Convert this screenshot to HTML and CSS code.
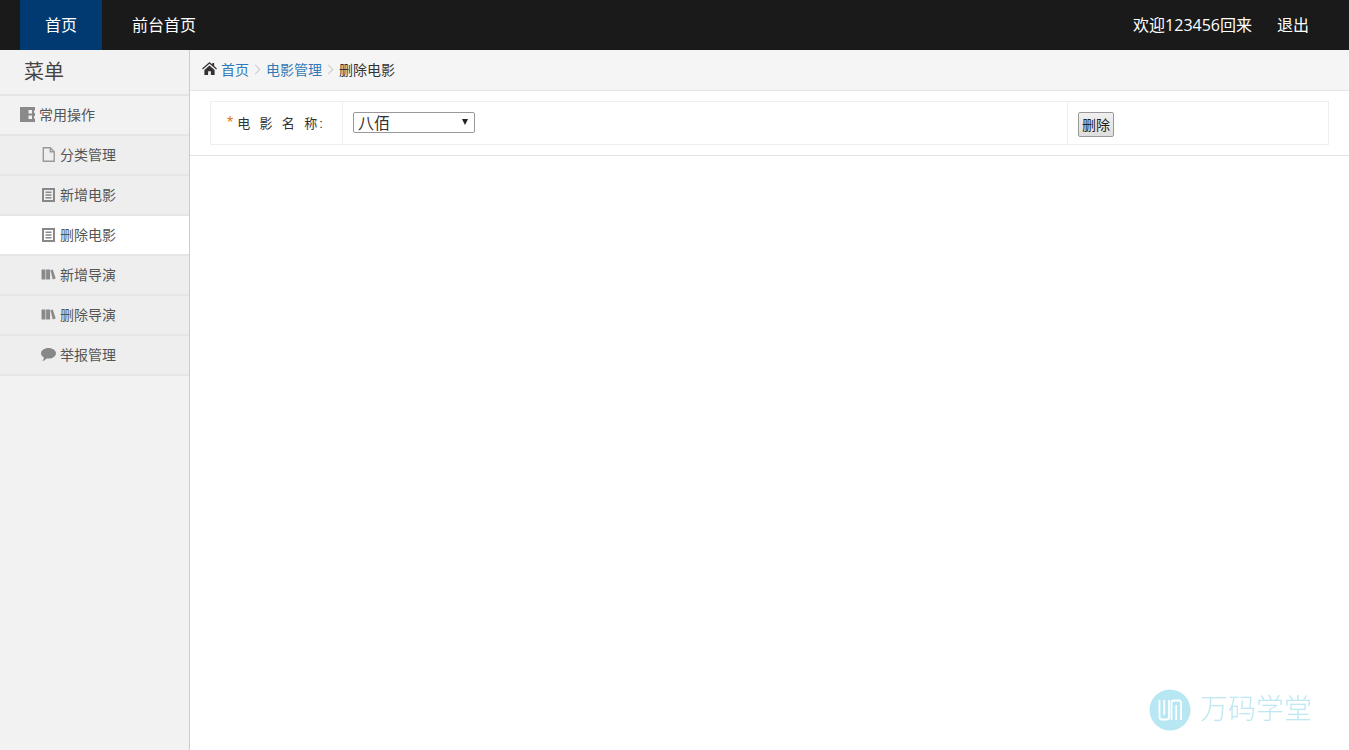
FILE: index.html
```html
<!DOCTYPE html>
<html lang="zh-CN">
<head>
<meta charset="utf-8">
<title>删除电影</title>
<link rel="stylesheet" href="styles.css">
</head>
<body>
<header class="navbar">
  <nav class="nav-left">
    <a class="nav-link active">首页</a>
    <a class="nav-link">前台首页</a>
  </nav>
  <nav class="nav-right">
    <a class="nav-link">欢迎123456回来</a>
    <a class="nav-link">退出</a>
  </nav>
</header>
<div class="layout">
  <aside class="sidebar">
    <div class="side-title">菜单</div>
    <div class="side-group">
      <svg class="ico" viewBox="0 0 15 15"><path fill-rule="evenodd" d="M0 0h15v3.500h-1v2.500h1v3h-1v2.500h1V15H0zM8.500 3v3.500h3.500V3zM8.500 8.500V12h3.500V8.500z" fill="#8a8a8a"/></svg>
      <span>常用操作</span>
    </div>
    <a class="side-item">
      <svg class="ico" viewBox="0 0 14 15"><path d="M1.800.8h7l3.900 3.900v9.500H1.800zM8.800.8v3.900h3.900" fill="none" stroke="#999" stroke-width="1.400"/></svg>
      <span>分类管理</span>
    </a>
    <a class="side-item">
      <svg class="ico" viewBox="0 0 14 15"><path fill-rule="evenodd" d="M.5 1h13v14H.5zM2.500 3v10h9V3zM4 4.500h6v1.500H4zM4 7.200h6v1.500H4zM4 9.900h6v1.500H4z" fill="#888"/></svg>
      <span>新增电影</span>
    </a>
    <a class="side-item current">
      <svg class="ico" viewBox="0 0 14 15"><path fill-rule="evenodd" d="M.5 1h13v14H.5zM2.500 3v10h9V3zM4 4.500h6v1.500H4zM4 7.200h6v1.500H4zM4 9.900h6v1.500H4z" fill="#888"/></svg>
      <span>删除电影</span>
    </a>
    <a class="side-item">
      <svg class="ico" viewBox="0 0 14 15"><path d="M0 2.500h4v10H0zM4.600 2.500h4v10h-4zM9 3.200l2.300-.7 2.900 9-3 .9z" fill="#8a8a8a"/></svg>
      <span>新增导演</span>
    </a>
    <a class="side-item">
      <svg class="ico" viewBox="0 0 14 15"><path d="M0 2.500h4v10H0zM4.600 2.500h4v10h-4zM9 3.200l2.300-.7 2.900 9-3 .9z" fill="#8a8a8a"/></svg>
      <span>删除导演</span>
    </a>
    <a class="side-item">
      <svg class="ico" viewBox="0 0 15 15"><path d="M7.500 1C11.600 1 15 3.300 15 6.300s-3.400 5.300-7.500 5.300c-.6 0-1.200 0-1.800-.1-1 1.200-2.500 2.200-4.400 2.500 1-1 1.500-2 1.600-3.500C1 9.500 0 8 0 6.300 0 3.300 3.400 1 7.500 1z" fill="#888"/></svg>
      <span>举报管理</span>
    </a>
  </aside>
  <main class="content">
    <div class="breadcrumb">
      <svg class="home" viewBox="0 0 16 14"><path d="M8 0l3 2.600V1h2v3.300l3 2.700-.8 1L8 1.800.8 8 0 7z M2.500 8.500L8 3.800l5.500 4.700V14H9.500v-4h-3v4h-4z" fill="#333"/></svg>
      <a class="crumb-link">首页</a>
      <span class="crumb-sep"></span>
      <a class="crumb-link">电影管理</a>
      <span class="crumb-sep"></span>
      <span class="crumb-now">删除电影</span>
    </div>
    <form class="form-band">
      <div class="form-row">
        <label class="cell-label"><i class="star">*</i>电 影 名 称:</label>
        <div class="cell-field">
          <div class="select-wrap">
            <select class="movie-select"><option>八佰</option></select>
          </div>
        </div>
        <div class="cell-action">
          <button type="button" class="del-btn">删除</button>
        </div>
      </div>
    </form>
  </main>
</div>
<div class="watermark">
  <svg class="wm-logo" viewBox="0 0 42 42">
    <circle cx="21" cy="21" r="20.500" fill="#b8e7f4"/>
    <path d="M10.500 11v17a2.500 2.500 0 0 0 2.500 2.500h4.500a2.500 2.500 0 0 0 2.500-2.500V11M15.200 11v15M22.500 31V14a2.500 2.500 0 0 1 2.500-2.500h4.500A2.500 2.500 0 0 1 32 14v17M27.200 31V16" fill="none" stroke="#fff" stroke-width="1.800"/>
  </svg>
  <span class="wm-text">万码学堂</span>
</div>
</body>
</html>
```

FILE: styles.css
```css
* { box-sizing: border-box; }
html, body { margin: 0; height: 100%; }
body {
  font-family: "Liberation Sans", "Noto Sans CJK SC", sans-serif;
  font-size: 14px;
  color: #333;
  background: #fff;
  overflow: hidden;
}
a { color: inherit; text-decoration: none; }

.navbar {
  height: 50px;
  background: #1a1a1a;
  display: flex;
  justify-content: space-between;
  padding: 0 20px;
}
.nav-left, .nav-right { display: flex; }
.nav-right { margin-right: 20px; }
.nav-link {
  color: #fff;
  font-family: "Open Sans", "Noto Sans CJK SC", sans-serif;
  font-size: 16px;
  height: 50px;
  line-height: 51px;
}
.nav-left .nav-link { padding: 0 25px; }
.nav-left .nav-link + .nav-link { padding: 0 5px 0 30px; }
.nav-link.active { background: #003a70; }
.nav-right .nav-link { padding: 0 0 0 25px; }

.layout { display: flex; height: 700px; }
.sidebar {
  width: 190px;
  flex: none;
  background: #f2f2f2;
  border-right: 1px solid #ccc;
}
.side-title {
  height: 46px;
  font-size: 20px;
  line-height: 44px;
  padding-left: 24px;
  border-bottom: 2px solid #e5e5e5;
  color: #444;
}
.side-group, .side-item {
  height: 40px;
  display: flex;
  align-items: center;
  padding-bottom: 2px;
  border-bottom: 2px solid #e5e5e5;
  color: #555;
}
.side-group { padding-left: 20px; gap: 4px; }
.side-item { padding-left: 41px; gap: 4px; background: #eee; }
.side-item.current { background: #fff; }
.ico { width: 15px; height: 15px; flex: none; }

.content { flex: 1; min-width: 0; }
.breadcrumb {
  height: 41px;
  background: #f5f5f5;
  border-bottom: 1px solid #e5e5e5;
  display: flex;
  align-items: center;
  padding-left: 12px;
  padding-bottom: 2px;
  font-size: 14px;
}
.home { width: 15px; height: 13px; margin-right: 4px; margin-top: -1px; }
.crumb-link { color: #337ab7; }
.crumb-now { color: #333; }
.crumb-sep {
  width: 7px;
  height: 7px;
  border-top: 1px solid #ccc;
  border-right: 1px solid #ccc;
  transform: rotate(45deg);
  margin: 0 7px 0 3px;
}
.form-band {
  height: 65px;
  padding: 10px 20px 0;
  border-bottom: 1px solid #e5e5e5;
  display: block;
}
.form-row {
  height: 44px;
  display: flex;
  border: 1px solid #eee;
}
.cell-label {
  width: 132px;
  flex: none;
  padding-left: 16px;
  line-height: 42px;
  font-size: 13px;
  letter-spacing: 2px;
  word-spacing: 1.700px;
  white-space: nowrap;
  border-right: 1px solid #eee;
}
.star {
  color: #e07b00;
  font-style: normal;
  font-size: 16px;
  letter-spacing: 0;
  margin-right: 4px;
}
.cell-field {
  width: 725px;
  flex: none;
  padding: 10px;
  border-right: 1px solid #eee;
}
.cell-action { flex: 1; padding: 10px; }
.select-wrap { position: relative; width: 122px; }
.select-wrap::after {
  content: "";
  position: absolute;
  left: 109px;
  top: 7px;
  border-top: 6px solid #222;
  border-left: 3px solid transparent;
  border-right: 3px solid transparent;
  pointer-events: none;
}
.movie-select {
  display: block;
  width: 122px;
  height: 21px;
  font-size: 16px;
  font-family: "Liberation Sans", "Noto Sans CJK SC", sans-serif;
  appearance: none;
  -webkit-appearance: none;
  background: #fff;
  border: 1px solid #999;
  border-radius: 2px;
  color: #333;
  padding: 2px 0 0 4px;
}
.del-btn {
  width: 36px;
  height: 25px;
  padding: 0 0 2px;
  font-size: 14px;
  font-family: "Liberation Sans", "Noto Sans CJK SC", sans-serif;
  background: linear-gradient(#f0f0f0, #dedede);
  border: 1px solid #999;
  border-radius: 2px;
  color: #222;
}

.watermark {
  position: fixed;
  left: 1149px;
  top: 689px;
  display: flex;
  align-items: center;
  gap: 9px;
}
.wm-logo { width: 42px; height: 42px; }
.wm-text {
  font-size: 28px;
  line-height: 42px;
  color: #bfe8f3;
  font-weight: 300;
}
```
